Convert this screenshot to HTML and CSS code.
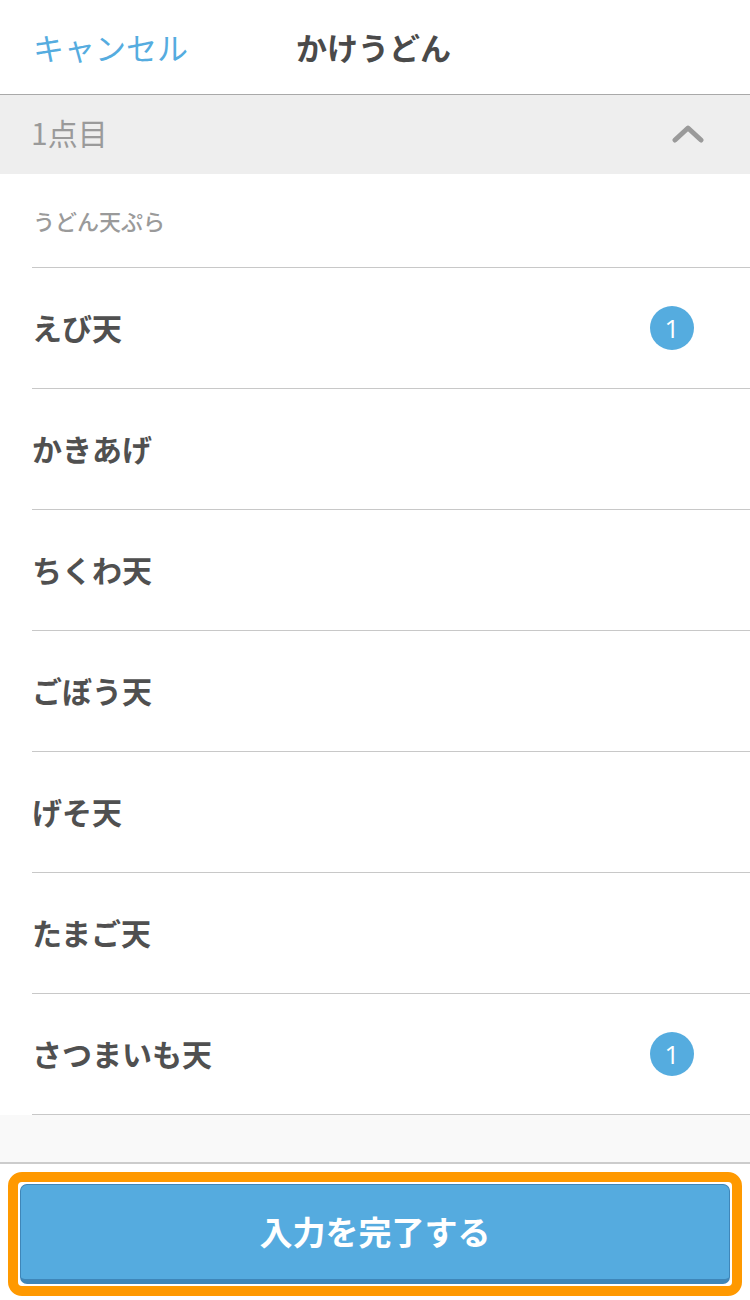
FILE: index.html
```html
<!DOCTYPE html>
<html lang="ja">
<head>
<meta charset="utf-8">
<link rel="stylesheet" href="styles.css">
</head>
<body>
<div class="page">
  <header class="topbar">
    <span class="cancel">キャンセル</span>
    <span class="title">かけうどん</span>
  </header>
  <div class="section-head">
    <span class="section-label">1点目</span>
    <svg class="chevron" width="32" height="20" viewBox="0 0 32 20"><polyline points="3,16 16,4 29,16" fill="none" stroke="#9a9a9a" stroke-width="5" stroke-linecap="round" stroke-linejoin="round"/></svg>
  </div>
  <div class="group-label">うどん天ぷら</div>
  <ul class="list">
    <li class="row"><span class="name">えび天</span><span class="badge">1</span></li>
    <li class="row"><span class="name">かきあげ</span></li>
    <li class="row"><span class="name">ちくわ天</span></li>
    <li class="row"><span class="name">ごぼう天</span></li>
    <li class="row"><span class="name">げそ天</span></li>
    <li class="row"><span class="name">たまご天</span></li>
    <li class="row last"><span class="name">さつまいも天</span><span class="badge">1</span></li>
  </ul>
  <div class="spacer"></div>
  <footer class="footer">
    <div class="focus-ring">
      <button class="done">入力を完了する</button>
    </div>
  </footer>
</div>
</body>
</html>
```
FILE: styles.css
```css
* { box-sizing: border-box; }
html, body { margin: 0; padding: 0; background: #fff; }
body {
  font-family: "Noto Sans CJK JP", "Noto Sans", sans-serif;
  width: 750px;
  height: 1300px;
  overflow: hidden;
}
.page { display: flex; flex-direction: column; }
.topbar {
  height: 95px;
  border-bottom: 1px solid #a9a9a9;
  display: flex;
  align-items: center;
  padding-left: 33px;
  padding-bottom: 2px;
}
.cancel {
  color: #55acdf;
  font-size: 31px;
  font-weight: 400;
  width: 263px;
}
.title {
  color: #4a4a4a;
  font-size: 31px;
  font-weight: 700;
}
.section-head {
  height: 79px;
  background: #eeeeee;
  display: flex;
  align-items: center;
  justify-content: space-between;
  padding: 0 46px 0 31px;
}
.section-label {
  color: #9a9a9a;
  font-size: 30px;
  font-weight: 400;
  margin-top: -5px;
}
.chevron { display: block; margin-top: -2px; }
.group-label {
  height: 93px;
  display: flex;
  align-items: center;
  padding-left: 33px;
  padding-bottom: 2px;
  color: #9a9a9a;
  font-size: 22px;
  font-weight: 500;
}
.list {
  list-style: none;
  margin: 0 0 0 32px;
  padding: 0;
}
.row {
  height: 121px;
  border-top: 1px solid #c8c8c8;
  display: flex;
  align-items: center;
  justify-content: space-between;
  padding: 0 56px 0 0;
}
.row.last { border-bottom: 1px solid #c8c8c8; height: 122px; }
.name {
  color: #505050;
  font-size: 30px;
  font-weight: 700;
  margin-top: -3px;
}
.badge {
  width: 44px;
  height: 44px;
  border-radius: 50%;
  background: #55acdf;
  color: #fff;
  font-family: "Open Sans", "Noto Sans", sans-serif;
  font-size: 26px;
  display: flex;
  align-items: center;
  justify-content: center;
  line-height: 1;
}
.spacer {
  height: 49px;
  background: #f9f9f9;
  border-bottom: 2px solid #cccccc;
}
.footer {
  padding: 8px 8px 0 8px;
}
.focus-ring {
  border: 10px solid #ff9900;
  border-radius: 14px;
  padding: 2px;
  background: #fff;
}
.done {
  display: flex;
  align-items: center;
  justify-content: center;
  width: 100%;
  height: 100px;
  background: #55abdf;
  border: 1px solid #3f86b8;
  border-bottom: 5px solid #3f86b8;
  border-radius: 7px;
  color: #fff;
  font-family: "Noto Sans CJK JP", sans-serif;
  font-size: 33px;
  font-weight: 700;
  padding: 0 0 2px 0;
}
```
